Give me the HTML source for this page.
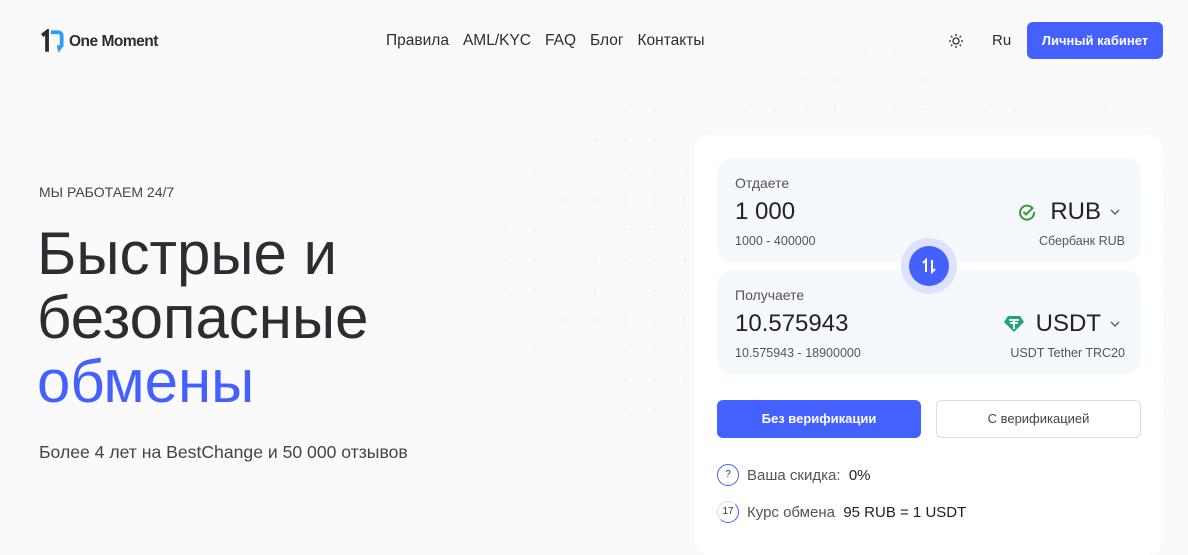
<!DOCTYPE html>
<html><head><meta charset="utf-8"><style>
*{margin:0;padding:0;box-sizing:border-box}
body{width:1188px;height:533px;overflow:hidden;background:#fafafa;font-family:"Liberation Sans",sans-serif;color:#2b2d33;position:relative}
.dots{position:absolute;left:400px;top:0;width:788px;height:533px;background-image:radial-gradient(circle,#eceef4 1.2px,transparent 1.8px);background-size:30px 30px;background-position:0 5px;-webkit-mask-image:radial-gradient(ellipse at 60% 50%,#000 20%,transparent 70%)}
.abs{position:absolute}
.nav a{margin:0 7px;font-size:15.5px;color:#2b2d33}
.card{left:694px;top:135px;width:469px;height:420px;background:#fff;border-radius:16px}
.box{position:absolute;left:23px;width:424px;height:104px;background:#f5f8fd;border-radius:16px}
.lbl{position:absolute;left:18px;top:17px;font-size:14px;color:#555}
.val{position:absolute;left:18px;top:40px;font-size:24px;color:#222}
.rng{position:absolute;left:18px;top:76px;font-size:12.5px;color:#555}
.cur{position:absolute;right:20px;top:40px;font-size:24px;color:#222;display:flex;align-items:center}
.sub{position:absolute;right:16px;top:76px;font-size:12.5px;color:#555}
</style></head><body>
<div class="dots"></div>
<div class="abs" style="left:40px;top:29px;display:flex;align-items:center">
<svg width="26" height="26" viewBox="0 0 24 24"><path d="M2 6 L6.5 2.5 V21" stroke="#2b2d33" stroke-width="3.5" fill="none"/><path d="M10 3 H17 A3 3 0 0 1 20 6 V16" stroke="#2a9df4" stroke-width="3.5" fill="none"/><path d="M15.5 15 L22 15 L17 22 Z" fill="#2a9df4"/></svg>
<span style="font-size:15.5px;font-weight:bold;margin-left:3px;letter-spacing:-0.5px">One Moment</span></div>
<div class="abs nav" style="left:379px;top:32px"><a>Правила</a><a>AML/KYC</a><a>FAQ</a><a>Блог</a><a>Контакты</a></div>
<svg class="abs" style="left:948px;top:33px" width="16" height="16" viewBox="0 0 16 16"><circle cx="8" cy="8" r="3" stroke="#333" stroke-width="1.3" fill="none"/><g stroke="#333" stroke-width="1.3"><path d="M8 1v2M8 13v2M1 8h2M13 8h2M3 3l1.4 1.4M11.6 11.6L13 13M3 13l1.4-1.4M11.6 4.4L13 3"/></g></svg>
<div class="abs" style="left:992px;top:32px;font-size:15px">Ru</div>
<div class="abs" style="left:1027px;top:22px;width:136px;height:37px;background:#4460fe;border-radius:6px;color:#fff;font-size:13px;font-weight:bold;text-align:center;line-height:37px">Личный кабинет</div>
<div class="abs" style="left:39px;top:184px;font-size:14px;color:#444">МЫ РАБОТАЕМ 24/7</div>
<div class="abs" style="left:37px;top:222px;font-size:60px;line-height:64px;color:#2b2d33">Быстрые и<br>безопасные<br><span style="color:#4460fe">обмены</span></div>
<div class="abs" style="left:39px;top:442px;font-size:17.6px;color:#444">Более 4 лет на BestChange и 50 000 отзывов</div>
<div class="abs card">
<div class="box" style="top:23px"><div class="lbl">Отдаете</div><div class="val">1 000</div><div class="rng">1000 - 400000</div>
<div class="cur"><svg width="18" height="18" viewBox="0 0 18 18" style="margin-right:14px"><path d="M15 6 A7 7 0 1 0 16 9" stroke="#3a9a3a" stroke-width="2" fill="none"/><path d="M5.5 9 L8 11.5 L15 4.5" stroke="#3a9a3a" stroke-width="2" fill="none"/></svg>RUB<svg width="12" height="8" viewBox="0 0 12 8" style="margin-left:8px"><path d="M2 2l4 4 4-4" stroke="#555" stroke-width="1.3" fill="none"/></svg></div><div class="sub">Сбербанк RUB</div></div>
<div class="box" style="top:135px"><div class="lbl">Получаете</div><div class="val">10.575943</div><div class="rng">10.575943 - 18900000</div>
<div class="cur"><svg width="20" height="18" viewBox="0 0 20 18" style="margin-right:12px"><path d="M4 1h12l4 6-10 10L0 7z" fill="#26a17b"/><path d="M5 5h10M10 5v9M6 8h8" stroke="#fff" stroke-width="1.8"/></svg>USDT<svg width="12" height="8" viewBox="0 0 12 8" style="margin-left:8px"><path d="M2 2l4 4 4-4" stroke="#555" stroke-width="1.3" fill="none"/></svg></div><div class="sub">USDT Tether TRC20</div></div>
<div style="position:absolute;left:207px;top:103px;width:56px;height:56px;border-radius:50%;background:#dde3ff"></div>
<div style="position:absolute;left:215px;top:111px;width:40px;height:40px;border-radius:50%;background:#4460fe"><svg width="40" height="40" viewBox="0 0 40 40"><path d="M17 26V14l-3 3M23 14v12l3-3" stroke="#fff" stroke-width="2" fill="none"/></svg></div>
<div style="position:absolute;left:23px;top:265px;width:204px;height:38px;background:#4460fe;border-radius:6px;color:#fff;font-size:13px;font-weight:bold;text-align:center;line-height:38px">Без верификации</div>
<div style="position:absolute;left:242px;top:265px;width:205px;height:38px;border:1px solid #ddd;border-radius:6px;color:#444;font-size:13px;text-align:center;line-height:36px">С верификацией</div>
<div style="position:absolute;left:23px;top:329px;display:flex;align-items:center;font-size:15px;color:#555"><span style="width:22px;height:22px;border:1.5px solid #4460fe;border-radius:50%;font-size:10px;text-align:center;line-height:19px;color:#333;margin-right:8px">?</span>Ваша скидка:&nbsp;&nbsp;<span style="color:#222">0%</span></div>
<div style="position:absolute;left:23px;top:366px;display:flex;align-items:center;font-size:15px;color:#555"><span style="width:22px;height:22px;border:1.5px solid #4460fe;border-left-color:#ddd;border-top-color:#ddd;border-radius:50%;font-size:10px;text-align:center;line-height:19px;color:#333;margin-right:8px">17</span>Курс обмена&nbsp;&nbsp;<span style="color:#222">95 RUB = 1 USDT</span></div>
</div>
</body></html>
